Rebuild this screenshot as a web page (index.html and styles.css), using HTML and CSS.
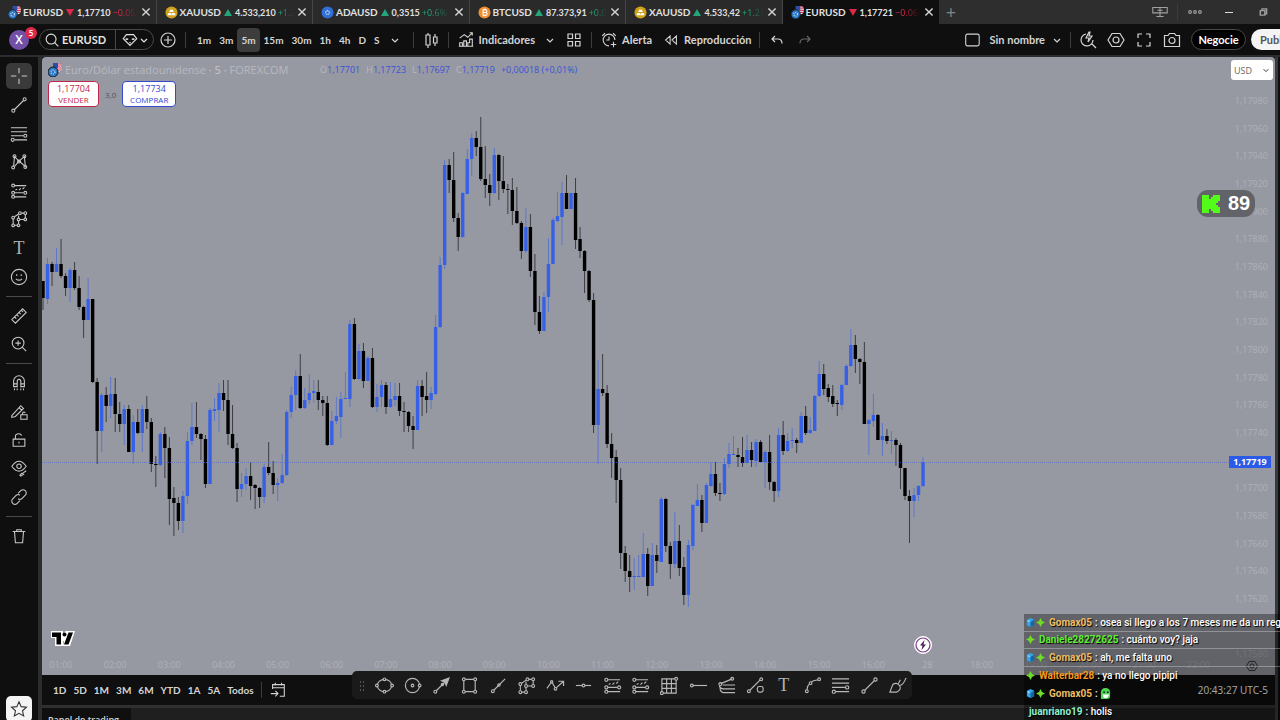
FILE: index.html
```html
<!DOCTYPE html>
<html lang="es">
<head>
    <meta charset="UTF-8">
    <meta name="viewport" content="width=device-width, initial-scale=1.0">
    <title>EURUSD 1,17721</title>
    <link rel="stylesheet" href="styles.css">
</head>
<body>
    <!-- icon sprite -->
    <svg class="sprite" aria-hidden="true">
        <symbol id="i-close" viewBox="0 0 10 10"><path d="M2 2l6 6M8 2l-6 6"/></symbol>
        <symbol id="i-chevron" viewBox="0 0 10 10"><path d="M2 4l3 3 3-3"/></symbol>
        <symbol id="i-pair" viewBox="0 0 14 14"><circle cx="9.500" cy="4.500" r="4.500" fill="#e8e8f0" stroke="none"/><path d="M9 1h4M9 3h5M9 5h5M9 7h4" stroke="#d8405a"/><path d="M5 0h5v5H5z" fill="#2a4fa8" stroke="none"/><circle cx="5" cy="9" r="5" fill="#2a78c8" stroke="#1a1a1a" stroke-width="1"/><circle cx="5" cy="9" r="2" stroke="#d8e0f0" stroke-dasharray="1 1"/></symbol>
        <symbol id="i-gold" viewBox="0 0 14 14"><circle cx="7" cy="7" r="6.500" fill="#d0a21c" stroke="none"/><path d="M5.500 4h3l1 2.500h-5zM3.500 7.500h3l.5 2.500H2.500zM7.500 7.500h3l1 2.500H7z" fill="#fff" stroke="none"/></symbol>
        <symbol id="i-ada" viewBox="0 0 14 14"><circle cx="7" cy="7" r="6.500" fill="#2f6fd6" stroke="none"/><circle cx="7" cy="7" r="2" stroke="#dde8ff" stroke-dasharray="1 .6"/></symbol>
        <symbol id="i-btc" viewBox="0 0 14 14"><circle cx="7" cy="7" r="6.500" fill="#ee9030" stroke="none"/><path d="M5.500 4v6M5 4h3a1.400 1.400 0 0 1 0 3H6h2.300a1.500 1.500 0 0 1 0 3H5M6.500 3v1M8 3v1M6.500 10v1M8 10v1" stroke="#fff"/></symbol>
        <symbol id="i-search" viewBox="0 0 20 20"><circle cx="9" cy="9" r="5.500"/><path d="M13 13l4 4"/></symbol>
        <symbol id="i-diamond" viewBox="0 0 20 20"><path d="M6 4h8l3.500 4.500L10 16 2.500 8.500zM6.500 8v2M8 9H5M13.500 8v2M15 9h-3M9 13h2"/></symbol>
        <symbol id="i-plus" viewBox="0 0 20 20"><circle cx="10" cy="10" r="7"/><path d="M10 6v8M6 10h8"/></symbol>
        <symbol id="i-candles" viewBox="0 0 20 20"><path d="M5 5h4v10H5zM7 3v2M7 15v3M12.500 7h3.500v6h-3.500zM14 4v3M14 13v3"/></symbol>
        <symbol id="i-indicators" viewBox="0 0 20 20"><path d="M3 8l5-4 4 3 5-5M14 2h3v3M3 17v-4h3v4M7.500 17v-6h3v6M12 17v-4h2v-4h3v8zM2 17h16"/></symbol>
        <symbol id="i-grid" viewBox="0 0 20 20"><path d="M4 4h4.500v4.500H4zM11.500 4H16v4.500h-4.500zM4 11.500h4.500V16H4zM11.500 11.500H16V16h-4.500z"/></symbol>
        <symbol id="i-alert" viewBox="0 0 20 20"><path d="M16.500 10A6.500 6.500 0 1 0 10 16.500M10 6v4H7M2.500 5.500l3-3M14.500 2.500l3 3M15 12v6M12 15h6"/></symbol>
        <symbol id="i-rewind" viewBox="0 0 20 20"><path d="M9 5.500v9L4 10zM16 5.500v9L11 10z"/></symbol>
        <symbol id="i-undo" viewBox="0 0 20 20"><path d="M8 6L5 9l3 3M5 9h6q4 0 4 4.500"/></symbol>
        <symbol id="i-redo" viewBox="0 0 20 20"><path d="M12 6l3 3-3 3M15 9H9q-4 0-4 4.500"/></symbol>
        <symbol id="i-square" viewBox="0 0 20 20"><rect x="3" y="3.500" width="15" height="13" rx="2"/></symbol>
        <symbol id="i-quick" viewBox="0 0 20 20"><path d="M8 4a6 6 0 1 0 7 6M14 14l4 4M11 2L8 8h3l-1 4 4-6h-3l1-4z"/></symbol>
        <symbol id="i-hex" viewBox="0 0 20 20"><path d="M6 3.500h8l4 6.500-4 6.500H6L2 10z"/><circle cx="10" cy="10" r="3"/></symbol>
        <symbol id="i-full" viewBox="0 0 20 20"><path d="M4 8V4h4M12 4h4v4M16 12v4h-4M8 16H4v-4"/></symbol>
        <symbol id="i-camera" viewBox="0 0 20 20"><path d="M2.500 5.500H6l1.500-2h5l1.500 2h3.500v11h-15z"/><circle cx="10" cy="10.500" r="3"/></symbol>
        <symbol id="i-layout" viewBox="0 0 20 20"><path d="M2 5h16v6H2zM10 5v10M6 15h8M7 8h6"/></symbol>
        <symbol id="i-dots" viewBox="0 0 20 20"><circle cx="4.500" cy="10" r="1.500"/><circle cx="10" cy="10" r="1.500"/><circle cx="15.500" cy="10" r="1.500"/></symbol>
        <symbol id="i-restore" viewBox="0 0 20 20"><path d="M7 8.500h5v5H7zM9 8V6.500h5V12h-1.500" stroke-width="1.600"/></symbol>
        <symbol id="i-cross" viewBox="0 0 20 20"><path d="M10 1v6M10 13v6M1 10h6M13 10h6"/></symbol>
        <symbol id="i-line" viewBox="0 0 20 20"><path d="M5 15L15 5"/><circle cx="3.700" cy="16.300" r="1.700"/><circle cx="16.300" cy="3.700" r="1.700"/></symbol>
        <symbol id="i-fib" viewBox="0 0 20 20"><path d="M1 3h18M1 7.500h18M1 12h14M5 16.500h14"/><circle cx="17" cy="12" r="1.700"/><circle cx="3" cy="16.500" r="1.700"/></symbol>
        <symbol id="i-pattern" viewBox="0 0 20 20"><path d="M4 15L5 4l5 5 6-5 1 11-7-6-5 6"/><circle cx="3.500" cy="16" r="1.600"/><circle cx="5" cy="3.500" r="1.600"/><circle cx="10" cy="9.500" r="1.600"/><circle cx="16" cy="3.500" r="1.600"/><circle cx="17" cy="15.500" r="1.600"/></symbol>
        <symbol id="i-position" viewBox="0 0 20 20"><path d="M5 4h13M5 12h10M5 16.500h13M6 9l2-1M10 9l2-2M14 8l2-2"/><circle cx="3.500" cy="4" r="1.600"/><circle cx="3.500" cy="12" r="1.600"/><circle cx="17" cy="12" r="1.600"/><circle cx="3.500" cy="16.500" r="1.600"/></symbol>
        <symbol id="i-ghost" viewBox="0 0 20 20"><path d="M3.500 10v5.500M5 17h3M9.500 15.500V12M11 10.500h4.500M17 9V5M15.500 3.500h-3M9.500 4.500L5 7.500M9.500 9V6"/><circle cx="3.500" cy="8.500" r="1.500"/><circle cx="3.500" cy="17" r="1.500"/><circle cx="9.500" cy="17" r="1.500"/><circle cx="9.500" cy="10.500" r="1.500"/><circle cx="17" cy="10.500" r="1.500"/><circle cx="17" cy="3.500" r="1.500"/><circle cx="11" cy="3.500" r="1.500"/></symbol>
        <symbol id="i-smile" viewBox="0 0 20 20"><circle cx="10" cy="10" r="8.500"/><path d="M6.500 12q3.500 3 7 0M7.500 7v2M12.500 7v2"/></symbol>
        <symbol id="i-ruler" viewBox="0 0 20 20"><path d="M2 14L14 2l4 4L6 18zM5 11l2 2M7.500 8.500l2 2M10 6l2 2M12.500 3.500l2 2"/></symbol>
        <symbol id="i-zoom" viewBox="0 0 20 20"><circle cx="9" cy="9" r="6.500"/><path d="M9 6v6M6 9h6M13.500 13.500L18 18"/></symbol>
        <symbol id="i-magnet" viewBox="0 0 20 20"><path d="M4 14V8a6 6 0 0 1 12 0v6h-4V8a2 2 0 0 0-4 0v6zM4 11h4M12 11h4M5 16v2M8 16v2M12 16v2M15 16v2"/></symbol>
        <symbol id="i-penlock" viewBox="0 0 20 20"><path d="M2 14L12 3l3 3L6 15l-4 1zM10 5l3 3M12 13h7v5h-7zM14 13v-2q1.500-2 3 0"/></symbol>
        <symbol id="i-lock" viewBox="0 0 20 20"><path d="M3.500 9h13v8h-13zM6 9V6q0-3 4-3 2 0 3 2M10 12v2"/></symbol>
        <symbol id="i-eye" viewBox="0 0 20 20"><path d="M2 8q8-11 16 0-8 11-16 0zM11 18l2-2 2 1-3 2zM14 16l4-3"/><circle cx="10" cy="8" r="2.500"/></symbol>
        <symbol id="i-link" viewBox="0 0 20 20"><path d="M9 6l3-3a3.500 3.500 0 0 1 5 5l-4 4q-2 1.500-4 0M11 14l-3 3a3.500 3.500 0 0 1-5-5l4-4q2-1.500 4 0"/></symbol>
        <symbol id="i-trash" viewBox="0 0 20 20"><path d="M3 5h14M7.500 5V3h5v2M5 5l1 12.500h8L15 5"/></symbol>
        <symbol id="i-star" viewBox="0 0 20 20"><path d="M10 2l2.400 5.400 5.900.6-4.400 4 1.300 5.800L10 14.800l-5.200 3L6.100 12 1.700 8l5.900-.6z"/></symbol>
        <symbol id="i-ellipse" viewBox="0 0 20 20"><ellipse cx="10" cy="10" rx="7.500" ry="6.500"/><g fill="#1a1a1a"><circle cx="10" cy="3.500" r="1.400"/><circle cx="10" cy="16.500" r="1.400"/><circle cx="2" cy="10" r="1.400"/><circle cx="18" cy="10" r="1.400"/></g></symbol>
        <symbol id="i-circle" viewBox="0 0 20 20"><circle cx="10" cy="10" r="7.500"/><circle cx="10" cy="10" r="1.400"/><circle cx="17.500" cy="10" r="1.400" fill="#1a1a1a"/></symbol>
        <symbol id="i-arrow" viewBox="0 0 20 20"><path d="M4.500 15.500L15 5"/><path d="M18 2l-3 8-1.500-3.500L10 5z" fill="currentColor"/><circle cx="3.500" cy="16.500" r="1.500"/><circle cx="11" cy="9" r="1.200"/></symbol>
        <symbol id="i-rect" viewBox="0 0 20 20"><path d="M4 3.500h12v13H4z"/><g fill="#1a1a1a"><circle cx="4" cy="3.500" r="1.500"/><circle cx="16" cy="3.500" r="1.500"/><circle cx="4" cy="16.500" r="1.500"/><circle cx="16" cy="16.500" r="1.500"/></g></symbol>
        <symbol id="i-ray" viewBox="0 0 20 20"><path d="M5 15L17 3"/><circle cx="4" cy="16" r="1.500"/><circle cx="10.500" cy="9.500" r="1.200"/></symbol>
        <symbol id="i-zigzag" viewBox="0 0 20 20"><path d="M1 13l5-7 4 7 8-7M13 5.500h5.500v5"/><circle cx="6" cy="6" r="1.200" fill="#1a1a1a"/><circle cx="10" cy="13.500" r="1.400" fill="#1a1a1a"/></symbol>
        <symbol id="i-hline" viewBox="0 0 20 20"><path d="M2 10h16"/><circle cx="10" cy="10" r="1.500" fill="#1a1a1a"/></symbol>
        <symbol id="i-hray" viewBox="0 0 20 20"><path d="M4 10h15"/><circle cx="3" cy="10" r="1.500"/></symbol>
        <symbol id="i-table" viewBox="0 0 20 20"><path d="M2 3h15v15H2zM7 3v15M12 3v15M2 8h15M2 13h15"/><circle cx="17" cy="3" r="1.500" fill="#1a1a1a"/><circle cx="2" cy="18" r="1.500" fill="#1a1a1a"/></symbol>
        <symbol id="i-fan" viewBox="0 0 20 20"><path d="M4 8l12-5M2.500 10.500q1 3 4 3H19M6 9.500h13M3 13q1 4.500 4 4.500h12"/><circle cx="3.500" cy="8.500" r="1.500"/><circle cx="16" cy="3" r="1.500"/></symbol>
        <symbol id="i-shapes" viewBox="0 0 20 20"><path d="M4 15L15 4"/><circle cx="3" cy="16" r="1.500"/><circle cx="16" cy="3.500" r="1.500"/><rect x="12" y="11" width="6" height="6" rx="2"/></symbol>
        <symbol id="i-curve" viewBox="0 0 20 20"><path d="M4 15Q5 5 16 4"/><circle cx="4" cy="16" r="1.500"/><circle cx="8" cy="7.500" r="1.400" fill="#1a1a1a"/><circle cx="17" cy="3.500" r="1.500"/></symbol>
        <symbol id="i-brush" viewBox="0 0 20 20"><path d="M2 17l3-8q4-3 7 1t-3 7zM11 8l2-4M12 10q4 0 7-8"/></symbol>
        <symbol id="i-calendar" viewBox="0 0 20 20"><path d="M4 9V4h13v13h-5M4 7.500h13M7 2v3M14 2v3M2 14h8M7 11l3 3-3 3"/></symbol>
        <symbol id="i-cube" viewBox="0 0 10 10"><path d="M5 0l4 2v6L5 10 1 8V2z" fill="#30a8e8" stroke="none"/><path d="M5 4.500L9 2v6L5 10z" fill="#1565a8" stroke="none"/><path d="M2 3l2 1" stroke="#b8ecff"/></symbol>
        <symbol id="i-spark" viewBox="0 0 10 10"><path d="M5 0l1.700 3.300L10 5 6.700 6.700 5 10 3.300 6.700 0 5l3.300-1.700z" fill="#6fdc26" stroke="none"/></symbol>
        <symbol id="i-emote" viewBox="0 0 12 12"><path d="M1 12V5q0-5 5-5t5 5v4q0 3-3 3z" fill="#4fd455" stroke="none"/><path d="M3 7h7q-1 4-4 4T3 7z" fill="#fff" stroke="none"/><circle cx="4.500" cy="4.500" r="1" fill="#123" stroke="none"/><circle cx="8.500" cy="4.500" r="1" fill="#123" stroke="none"/></symbol>
    </svg>

    <header>
        <div class="titlebar">
            <nav class="tabs">
                <div class="tab"><svg><use href="#i-pair"/></svg><a href="#">EURUSD</a><i class="down"></i><b>1,17710</b><span class="pct red">−0.05%</span><button aria-label="Cerrar"><svg><use href="#i-close"/></svg></button></div>
                <div class="tab"><svg><use href="#i-gold"/></svg><a href="#">XAUUSD</a><i class="up"></i><b>4.533,210</b><span class="pct green">+1.2%</span><button aria-label="Cerrar"><svg><use href="#i-close"/></svg></button></div>
                <div class="tab"><svg><use href="#i-ada"/></svg><a href="#">ADAUSD</a><i class="up"></i><b>0,3515</b><span class="pct green">+0.6% / U</span><button aria-label="Cerrar"><svg><use href="#i-close"/></svg></button></div>
                <div class="tab"><svg><use href="#i-btc"/></svg><a href="#">BTCUSD</a><i class="up"></i><b>87.373,91</b><span class="pct green">+0.06%</span><button aria-label="Cerrar"><svg><use href="#i-close"/></svg></button></div>
                <div class="tab"><svg><use href="#i-gold"/></svg><a href="#">XAUUSD</a><i class="up"></i><b>4.533,42</b><span class="pct green">+1.21%</span><button aria-label="Cerrar"><svg><use href="#i-close"/></svg></button></div>
                <div class="tab active"><svg><use href="#i-pair"/></svg><a href="#">EURUSD</a><i class="down"></i><b>1,17721</b><span class="pct red">−0.06%</span><button aria-label="Cerrar"><svg><use href="#i-close"/></svg></button></div>
            </nav>
            <button class="new-tab" aria-label="Nueva pestaña">+</button>
            <div class="window-buttons">
                <button aria-label="Diseño"><svg><use href="#i-layout"/></svg></button>
                <span class="sep"></span>
                <button aria-label="Más"><svg><use href="#i-dots"/></svg></button>
                <button aria-label="Minimizar"><span class="minimize"></span></button>
                <button aria-label="Restaurar"><svg><use href="#i-restore"/></svg></button>
            </div>
        </div>

        <div class="toolbar">
            <button class="avatar">X<span class="badge">5</span></button>
            <div class="symbol">
                <button class="symbol-name"><svg><use href="#i-search"/></svg>EURUSD</button>
                <button class="symbol-more" aria-label="Comparar"><svg><use href="#i-diamond"/></svg><svg class="small"><use href="#i-chevron"/></svg></button>
            </div>
            <button class="icon" aria-label="Añadir"><svg><use href="#i-plus"/></svg></button>
            <span class="sep"></span>
            <div class="intervals">
                <button>1m</button><button>3m</button><button class="on">5m</button><button>15m</button><button>30m</button><button>1h</button><button>4h</button><button>D</button><button>S</button>
                <button aria-label="Más intervalos"><svg class="small"><use href="#i-chevron"/></svg></button>
            </div>
            <span class="sep"></span>
            <button class="icon" aria-label="Velas"><svg><use href="#i-candles"/></svg></button>
            <span class="sep"></span>
            <button class="labelled"><svg><use href="#i-indicators"/></svg>Indicadores</button>
            <button class="narrow" aria-label="Favoritos"><svg class="small"><use href="#i-chevron"/></svg></button>
            <button class="icon" aria-label="Plantillas"><svg><use href="#i-grid"/></svg></button>
            <span class="sep"></span>
            <button class="labelled"><svg><use href="#i-alert"/></svg>Alerta</button>
            <button class="labelled"><svg><use href="#i-rewind"/></svg>Reproducción</button>
            <span class="sep"></span>
            <button class="icon" aria-label="Deshacer"><svg><use href="#i-undo"/></svg></button>
            <button class="icon dim" aria-label="Rehacer"><svg><use href="#i-redo"/></svg></button>
            <div class="right">
                <button class="labelled"><svg><use href="#i-square"/></svg>Sin nombre</button>
                <button class="narrow" aria-label="Diseños"><svg class="small"><use href="#i-chevron"/></svg></button>
                <span class="sep"></span>
                <button class="icon" aria-label="Búsqueda rápida"><svg><use href="#i-quick"/></svg></button>
                <button class="icon" aria-label="Configuración"><svg><use href="#i-hex"/></svg></button>
                <button class="icon" aria-label="Pantalla completa"><svg><use href="#i-full"/></svg></button>
                <button class="icon" aria-label="Captura"><svg><use href="#i-camera"/></svg></button>
                <button class="trade">Negocie</button>
                <button class="publish">Publicar</button>
            </div>
        </div>
    </header>

    <main>
        <aside>
            <div class="tools eight">
                <button class="on" aria-label="Cruz"><svg><use href="#i-cross"/></svg></button>
                <button aria-label="Línea"><svg><use href="#i-line"/></svg></button>
                <button aria-label="Fibonacci"><svg><use href="#i-fib"/></svg></button>
                <button aria-label="Patrones"><svg><use href="#i-pattern"/></svg></button>
                <button aria-label="Posición"><svg><use href="#i-position"/></svg></button>
                <button aria-label="Pronóstico"><svg><use href="#i-ghost"/></svg></button>
                <button class="serif">T</button>
                <button aria-label="Iconos"><svg><use href="#i-smile"/></svg></button>
            </div>
            <hr>
            <div class="tools two">
                <button aria-label="Medir"><svg><use href="#i-ruler"/></svg></button>
                <button aria-label="Zoom"><svg><use href="#i-zoom"/></svg></button>
            </div>
            <hr>
            <div class="tools five">
                <button aria-label="Imán"><svg><use href="#i-magnet"/></svg></button>
                <button aria-label="Modo dibujo"><svg><use href="#i-penlock"/></svg></button>
                <button aria-label="Bloquear"><svg><use href="#i-lock"/></svg></button>
                <button aria-label="Ocultar"><svg><use href="#i-eye"/></svg></button>
                <button aria-label="Enlazar"><svg><use href="#i-link"/></svg></button>
            </div>
            <hr>
            <div class="tools one">
                <button aria-label="Eliminar"><svg><use href="#i-trash"/></svg></button>
            </div>
            <button class="favorite" aria-label="Barra de favoritos"><svg><use href="#i-star"/></svg></button>
        </aside>

        <div class="center">
            <section class="chart">
                <svg id="plot" class="plot"></svg>

                <div class="legend">
                    <div class="legend-row">
                        <svg><use href="#i-pair"/></svg>
                        <h1>Euro/Dólar estadounidense <em>· 5 ·</em> FOREXCOM</h1>
                        <p class="ohlc"><span>O<b>1,17701</b></span><span>H<b>1,17723</b></span><span>L<b>1,17697</b></span><span>C<b>1,17719</b></span><b>+0,00018 (+0,01%)</b></p>
                    </div>
                    <div class="orders">
                        <button class="sell"><b>1,17704</b>VENDER</button>
                        <span>3,0</span>
                        <button class="buy"><b>1,17734</b>COMPRAR</button>
                    </div>
                </div>

                <div id="price_axis" class="price-axis">
                    <select aria-label="Moneda"><option>USD</option></select>
                    <svg class="select-arrow"><use href="#i-chevron"/></svg>
                    <strong class="last-price">1,17719</strong>
                </div>
                <div id="time_axis" class="time-axis"></div>

                <svg class="logo" viewBox="0 0 26 17"><path d="M1 1h12v4h1a3 3 0 0 1 3-4h8l-5 15h-7l1-5h-1v5H5V8H1z" fill="#fff"/><path d="M2 2.500h9v12H6.500V7H2zM18.500 2.500H23l-4.500 12H14z" fill="#000"/><circle cx="14.500" cy="4.500" r="2" fill="#000"/></svg>
                <svg class="event" viewBox="0 0 18 18"><circle cx="9" cy="9" r="8.500" fill="#fff" stroke="#fff" stroke-width="1"/><circle cx="9" cy="9" r="7" stroke="#7b3a86"/><path d="M10.500 4L6 9.500h2.500L7.500 14 12 8.500H9.500z" fill="#4a1c58" stroke="none"/></svg>
                <button class="axis-settings" aria-label="Ajustes del eje"><svg><use href="#i-hex"/></svg></button>

                <div class="drawbar">
                    <span class="handle"></span>
                    <div class="draw-icons">
                        <button aria-label="Elipse"><svg><use href="#i-ellipse"/></svg></button>
                        <button aria-label="Círculo"><svg><use href="#i-circle"/></svg></button>
                        <button aria-label="Flecha"><svg><use href="#i-arrow"/></svg></button>
                        <button aria-label="Rectángulo"><svg><use href="#i-rect"/></svg></button>
                        <button aria-label="Rayo"><svg><use href="#i-ray"/></svg></button>
                        <button aria-label="Pronóstico"><svg><use href="#i-ghost"/></svg></button>
                        <button aria-label="Trayectoria"><svg><use href="#i-zigzag"/></svg></button>
                        <button aria-label="Horizontal"><svg><use href="#i-hline"/></svg></button>
                        <button aria-label="Posición larga"><svg><use href="#i-position"/></svg></button>
                        <button aria-label="Posición corta"><svg><use href="#i-position"/></svg></button>
                        <button aria-label="Tabla"><svg><use href="#i-table"/></svg></button>
                        <button aria-label="Rayo horizontal"><svg><use href="#i-hray"/></svg></button>
                        <button aria-label="Abanico"><svg><use href="#i-fan"/></svg></button>
                        <button aria-label="Formas"><svg><use href="#i-shapes"/></svg></button>
                        <button class="serif">T</button>
                        <button aria-label="Curva"><svg><use href="#i-curve"/></svg></button>
                        <button aria-label="Fibonacci"><svg><use href="#i-fib"/></svg></button>
                        <button aria-label="Línea"><svg><use href="#i-line"/></svg></button>
                        <button aria-label="Pincel"><svg><use href="#i-brush"/></svg></button>
                    </div>
                </div>
            </section>

            <div class="ranges">
                <button>1D</button><button>5D</button><button>1M</button><button>3M</button><button>6M</button><button>YTD</button><button>1A</button><button>5A</button><button>Todos</button>
                <span class="sep"></span>
                <button aria-label="Ir a"><svg><use href="#i-calendar"/></svg></button>
                <button class="clock">20:43:27 UTC-5</button>
            </div>
            <div class="panel"><button>Panel de trading</button></div>
        </div>
    </main>

    <div class="viewers">
        <svg viewBox="0 0 18 18"><path d="M0 0h7v4h2V2h2V0h7v6h-2v2h-2v2h2v2h2v6h-7v-2H9v-2H7v4H0z" fill="#53fc18"/></svg>89
    </div>

    <ul class="chat">
        <li><svg><use href="#i-cube"/></svg><svg><use href="#i-spark"/></svg><b class="gold">Gomax05</b>: osea si llego a los 7 meses me da un regalo</li>
        <li><svg><use href="#i-spark"/></svg><b class="lime">Daniele28272625</b>: cuánto voy? jaja</li>
        <li><svg><use href="#i-cube"/></svg><svg><use href="#i-spark"/></svg><b class="gold">Gomax05</b>: ah, me falta uno</li>
        <li><svg><use href="#i-spark"/></svg><b class="orange">Walterbar28</b>: ya no llego pipipi</li>
        <li><svg><use href="#i-cube"/></svg><svg><use href="#i-spark"/></svg><b class="gold">Gomax05</b>: <svg class="emote"><use href="#i-emote"/></svg></li>
        <li><b class="mint">juanriano19</b>: holis</li>
    </ul>

    <script src="chart.js"></script>
</body>
</html>
```
FILE: styles.css
```css
*{
    box-sizing: border-box;
}

body{
    margin: 0;
    height: 100vh;
    overflow: hidden;
    display: flex;
    flex-direction: column;
    background: #0f0f0f;
    color: #d4d4d4;
    font-family: "Open Sans", "Noto Sans", sans-serif;
    font-size: 11px;
    position: relative;
}

button{
    background: none;
    border: 0;
    padding: 0;
    margin: 0;
    color: inherit;
    font: inherit;
    white-space: nowrap;
    display: flex;
    align-items: center;
    justify-content: center;
}

a{
    color: inherit;
    text-decoration: none;
}

svg{
    width: 18px;
    height: 18px;
    flex: none;
    fill: none;
    stroke: currentColor;
    stroke-width: 1.2;
}

svg.small{
    width: 10px;
    height: 10px;
}

.sprite{
    position: absolute;
    width: 0;
    height: 0;
}

.sep{
    width: 1px;
    height: 16px;
    background: #3c3c3c;
    flex: none;
}

/* window tabs */
.titlebar{
    display: flex;
    height: 24px;
    background: #2e2e2e;
}

.tabs{
    flex: 0 1 939px;
    display: grid;
    grid-template-columns: repeat(6, 1fr);
}

.tab{
    display: flex;
    align-items: center;
    gap: 2px;
    padding: 0 4px 0 8px;
    min-width: 0;
    font-size: 9px;
    border-right: 1px solid #454545;
    background: #2a2a2a;
}

.tab.active{
    background: #0f0f0f;
    border: 0;
}

.tab svg{
    width: 13px;
    height: 13px;
}

.tab a, .tab b{
    font-family: Lato, sans-serif;
    font-weight: 700;
    color: #e0e0e0;
}

.tab a{
    font-size: 10px;
}

.tab i{
    margin: 0 1px;
    border: 4px solid transparent;
    border-top-width: 0;
    border-bottom: 7px solid #22a67a;
}

.tab i.down{
    border-top: 7px solid #e0284a;
    border-bottom-width: 0;
}

.pct{
    flex: 1;
    overflow: hidden;
    white-space: nowrap;
    mask-image: linear-gradient(90deg, #000 30%, transparent);
}

.red{
    color: #e0284a;
}

.green{
    color: #22a67a;
}

.tab button svg{
    width: 12px;
    height: 12px;
}

.new-tab{
    width: 24px;
    font-size: 18px;
    color: #858585;
}

.window-buttons{
    margin-left: auto;
    display: flex;
    align-items: center;
}

.window-buttons button{
    width: 34px;
    color: #a0a0a0;
}

.minimize{
    width: 8px;
    height: 1px;
    background: #ddd;
}

/* top toolbar */
.toolbar{
    display: flex;
    align-items: center;
    height: 33px;
    border-bottom: 2px solid #2c2c2e;
    font-weight: 600;
    overflow: hidden;
}

.toolbar svg:not(.small){
    width: 20px;
    height: 20px;
}

.avatar{
    position: relative;
    width: 20px;
    height: 20px;
    margin: 0 10px 0 9px;
    flex: none;
    border-radius: 50%;
    background: #7350a8;
    color: #fff;
    font-size: 12px;
}

.badge{
    position: absolute;
    left: 16px;
    top: -3px;
    width: 12px;
    height: 12px;
    border-radius: 50%;
    background: #e0284a;
    font-size: 8px;
    line-height: 12px;
}

.symbol{
    display: flex;
    width: 115px;
    height: 21px;
    border: 1px solid #4a4a4a;
    border-radius: 11px;
    color: #e4e4e4;
}

.toolbar .symbol svg:not(.small), .toolbar .labelled svg{
    width: 18px;
    height: 18px;
}

.symbol-name{
    width: 75px;
    gap: 1px;
    padding-left: 3px;
    justify-content: flex-start;
}

.symbol-more{
    flex: 1;
    border-left: 1px solid #4a4a4a;
}

.symbol-name, .labelled, .trade, .publish, .intervals{
    font-family: Lato, "Open Sans", sans-serif;
    font-weight: 700;
}

.icon{
    width: 28px;
    height: 24px;
    flex: none;
}

.intervals{
    display: flex;
    height: 24px;
    padding: 0 4px;
    font-size: 10px;
}

.intervals button{
    padding: 0 4px;
    border-radius: 4px;
}

.intervals button:last-child{
    padding: 0 6px;
}

.intervals button.on{
    background: #3d3d3d;
}

.toolbar > .sep{
    margin: 0 3px;
}

.labelled{
    gap: 4px;
    margin: 0 5px;
}

.narrow{
    width: 20px;
}

.dim{
    color: #666;
}

.right{
    margin-left: auto;
    display: flex;
    align-items: center;
}

.right .labelled{
    gap: 9px;
    margin: 0 2px;
}

.right .sep{
    margin: 0 3px;
}

.trade{
    height: 21px;
    width: 55px;
    margin: 0 5px;
    border: 1px solid #4a4a4a;
    border-radius: 11px;
    background: #000;
    color: #fff;
}

.publish{
    width: 29px;
    height: 21px;
    padding-left: 9px;
    overflow: hidden;
    justify-content: flex-start;
    border-radius: 11px 0 0 11px;
    background: #f4f4f4;
    color: #555;
}

/* drawing tools */
main{
    flex: 1;
    min-height: 0;
    display: flex;
}

aside{
    width: 42px;
    padding-top: 5px;
    display: flex;
    flex-direction: column;
    align-items: center;
    border-right: 4px solid #2c2e2e;
    color: #c8c8c8;
}

.tools{
    display: grid;
    grid-auto-rows: 1fr;
    align-items: center;
}

.eight{ height: 229px; }
.two{ height: 56px; }
.five{ height: 142px; }
.one{ height: 28px; }

.tools button{
    width: 26px;
    height: 26px;
    border-radius: 5px;
}

.tools button.on{
    background: #3a3a3a;
}

button.serif{
    font-family: "Liberation Serif", serif;
    font-size: 18px;
    color: #b0b0b0;
}

aside hr{
    width: 26px;
    margin: 5px 0;
    border: 0;
    border-top: 1px solid #4a4a4a;
}

.favorite{
    width: 26px;
    height: 26px;
    margin-top: auto;
    margin-bottom: -2px;
    border-radius: 5px;
    background: #f4f4f4;
    color: #333;
}

.center{
    flex: 1;
    min-width: 0;
    display: flex;
    flex-direction: column;
    border-right: 3px solid #38393b;
    margin-right: 2px;
}

/* chart */
.chart{
    flex: 1;
    min-height: 0;
    position: relative;
    background: #9799a2;
    border-radius: 4px 4px 0 0;
}

.plot{
    position: absolute;
    width: 100%;
    height: 100%;
    stroke-width: 1;
    stroke: none;
}

.plot .up{
    fill: #3660e6;
}

.plot .down{
    fill: #000;
}

.plot .wick{
    opacity: 0.6;
}

.legend{
    position: relative;
    padding: 3px 6px;
}

.legend-row{
    display: flex;
    align-items: center;
    gap: 3px;
    height: 19px;
}

.legend-row svg{
    width: 14px;
    height: 14px;
}

h1{
    margin: 0;
    width: 252px;
    font-size: 11px;
    font-weight: 400;
    color: #b6b8c1;
    white-space: nowrap;
}

h1 em{
    font-style: normal;
    color: #c6c8cf;
}

.ohlc{
    margin: 0;
    display: flex;
    gap: 6px;
    font-size: 9px;
    color: #b6b8c1;
    white-space: nowrap;
}

.ohlc b{
    font-weight: 400;
    color: #3a50dc;
}

.orders{
    display: flex;
    align-items: center;
    gap: 6px;
    margin-top: 2px;
    font-size: 8px;
    color: #50525a;
}

.orders button{
    height: 26px;
    flex-direction: column;
    background: #fff;
    border: 1px solid;
    border-radius: 4px;
    line-height: 11px;
}

.orders b{
    font-size: 9px;
    font-weight: 400;
}

.sell{
    width: 51px;
    color: #c0284a;
}

.buy{
    width: 54px;
    color: #3448d0;
}

.price-axis{
    position: absolute;
    right: 0;
    top: 0;
    width: 46px;
    height: 100%;
}

.price-axis span, .time-axis span{
    position: absolute;
    line-height: 12px;
    font-size: 9px;
    color: #aeb0b9;
}

.price-axis span{
    right: 7px;
}

.price-axis select{
    position: absolute;
    left: 2px;
    top: 3px;
    width: 42px;
    height: 20px;
    padding: 0 3px;
    appearance: none;
    border: 0;
    border-radius: 3px;
    background: #fff;
    color: #666;
    font: 9px "Open Sans", sans-serif;
}

.select-arrow{
    position: absolute;
    right: 5px;
    top: 9px;
    width: 8px;
    height: 8px;
    color: #333;
}

.last-price{
    position: absolute;
    left: 0;
    top: 399px;
    width: 42px;
    height: 12px;
    background: #2c5ae8;
    color: #fff;
    font-size: 9px;
    line-height: 12px;
    text-align: center;
}

.time-axis{
    position: absolute;
    left: 0;
    right: 46px;
    bottom: 4px;
    height: 12px;
    overflow: hidden;
}

.time-axis span{
    transform: translateX(-50%);
}

.logo{
    position: absolute;
    left: 8px;
    bottom: 28px;
    width: 26px;
    height: 17px;
    stroke: none;
}

.event{
    position: absolute;
    left: 872px;
    bottom: 21px;
}

.axis-settings{
    position: absolute;
    right: 16px;
    bottom: 2px;
    color: #222;
}

.axis-settings svg{
    width: 14px;
    height: 14px;
}

.drawbar{
    position: absolute;
    z-index: 1;
    left: 310px;
    bottom: -24px;
    width: 560px;
    height: 28px;
    display: flex;
    align-items: center;
    border-radius: 5px;
    background: #1a1a1a;
    color: #b8b8b8;
}

.drawbar svg{
    width: 19px;
    height: 19px;
}

.handle{
    width: 5px;
    height: 11px;
    margin: 0 6px 0 7px;
    background: radial-gradient(circle, #555 1px, transparent 1px) 0 0 / 3px 4px;
}

.draw-icons{
    flex: 1;
    display: grid;
    grid-template-columns: repeat(19, 1fr);
}

/* bottom */
.ranges{
    display: flex;
    align-items: center;
    gap: 7px;
    height: 30px;
    flex: none;
    padding: 0 7px 0 11px;
    font-family: Lato, "Open Sans", sans-serif;
    font-weight: 700;
    font-size: 10px;
}

.clock{
    margin-left: auto;
    font-family: "Open Sans", sans-serif;
    font-weight: 400;
    color: #fff;
}

.panel{
    flex: none;
    height: 15px;
    border-top: 3px solid #303030;
    background: #1f1f1f;
    overflow: hidden;
}

.panel button{
    width: 89px;
    height: 24px;
    padding: 5px 6px;
    background: #0f0f0f;
    font-size: 9px;
    font-weight: 600;
    align-items: flex-start;
    justify-content: flex-start;
    line-height: 14px;
}

/* stream overlays */
.viewers{
    position: absolute;
    right: 25px;
    top: 190px;
    width: 58px;
    height: 27px;
    display: flex;
    align-items: center;
    justify-content: center;
    gap: 8px;
    border-radius: 11px;
    background: #626368;
    color: #fff;
    font: bold 20px "Liberation Sans", sans-serif;
}

.viewers svg{
    stroke: none;
}

.chat{
    position: absolute;
    z-index: 2;
    right: 0;
    bottom: 0;
    width: 256px;
    height: 106px;
    margin: 0;
    padding: 0;
    list-style: none;
    display: grid;
    grid-template-rows: repeat(6, 1fr);
    overflow: hidden;
    background: rgba(0, 0, 0, 0.35);
    font: 500 10px Roboto, sans-serif;
    color: #fff;
}

.chat li{
    display: flex;
    align-items: center;
    padding-left: 2px;
    white-space: pre;
    text-shadow: 1px 1px 1px #000;
}

.chat li:nth-child(-n+4){
    border-bottom: 1px solid rgba(255, 255, 255, 0.3);
}

.chat li:nth-child(4){
    border-color: transparent;
}

.chat svg{
    width: 9px;
    height: 9px;
    margin-right: 1px;
}

.chat svg.emote{
    width: 11px;
    height: 11px;
}

.chat b{
    margin: 0 3px;
    font-weight: 700;
}

.gold{ color: #f2bd62; }
.lime{ color: #5cf032; }
.orange{ color: #f79a1e; }
.mint{ color: #8ff0cf; }
```
FILE: chart.js
```js
// one entry per candle: direction, body top, body bottom, high, low
const candles = `
d281,298,281,310 u264,299,258,304 d264,272,262,286 u264,272,248,272 d264,276,239,278 d276,288,273,296
u270,288,268,302 d270,288,262,290 d288,307,276,310 d307,320,306,338 u299,320,278,320 d299,382,299,383
d382,431,378,464 u395,431,393,452 d395,406,387,422 u394,406,377,418 d394,414,378,432 d414,424,402,432
u409,424,405,445 d409,452,405,452 u422,452,415,464 d422,433,409,434 u409,433,405,452 d409,422,396,429
d422,464,418,472 d464,465,456,487 u434,465,432,466 d434,448,427,478 d448,499,437,525 d498,503,487,536
d503,521,497,530 u496,521,491,533 u441,496,432,504 u427,441,403,445 d427,434,402,438 d434,439,433,460
d439,484,435,488 u410,484,408,484 u409,411,398,421 u393,410,383,432 d393,400,380,411 d400,434,380,445
d434,448,405,449 d448,489,443,502 u484,489,473,497 u476,484,468,490 d476,486,462,500 d485,488,484,509
d488,497,487,508 u467,497,464,503 d467,473,442,475 d473,485,461,494 u483,485,478,501 u475,483,454,484
u412,475,410,476 u395,412,387,418 u376,395,370,410 d376,408,354,409 u400,408,388,409 u393,400,374,404
u391,393,380,403 d392,400,380,410 d400,403,396,416 d403,445,396,446 u421,445,411,445 u416,421,397,424
u399,417,392,438 u398,399,372,399 u324,399,320,407 d324,379,318,380 u351,379,344,380 d351,381,343,388
u358,381,356,381 d358,407,348,408 u397,407,384,412 u385,397,380,407 d385,407,382,414 u399,407,382,408
u396,400,383,406 d396,411,383,416 d411,412,402,432 d412,426,411,432 d426,430,416,449 u386,430,380,430
d386,397,380,416 d396,400,372,413 u393,400,387,409 u327,394,315,395 u265,327,257,328 u165,265,160,269
d165,180,159,193 d180,218,152,222 d218,237,213,251 u193,237,192,238 u159,194,149,194 u138,159,133,176
d138,147,131,156 d147,179,117,181 d179,185,146,198 d185,193,174,206 u155,193,148,194 d155,181,154,200
d181,189,156,193 d189,190,184,214 d190,211,178,225 d211,223,187,224 d223,251,221,259 u227,251,208,253
d227,271,214,277 d271,312,254,325 d312,331,296,334 u297,331,292,331 u264,297,238,312 u220,264,218,264
u216,221,192,222 u193,217,182,245 d193,209,175,209 u193,209,193,209 d193,240,178,249 d239,251,227,258
d251,271,250,293 d271,300,270,302 d300,425,293,433 u389,425,360,464 d389,393,354,396 d393,444,385,448
d444,458,433,478 d457,480,450,503 d480,553,468,569 d553,571,546,582 d571,577,555,592 u576,577,558,590
u576,577,555,577 u554,577,533,577 d554,586,548,596 u555,586,543,586 d555,561,545,573 u499,562,497,562
d499,546,498,552 d546,564,542,579 u541,564,512,568 d541,568,525,576 d567,595,557,605 u545,595,540,607
u505,546,504,550 u500,506,484,506 d500,523,495,532 u485,523,483,523 u474,486,462,487 d474,493,462,496
d493,494,483,501 u464,494,458,495 u454,464,443,468 u454,455,436,455 d455,457,448,467 d457,463,437,467
u450,463,435,463 d450,460,442,467 u442,461,439,467 d442,462,440,462 u452,462,450,488 d452,482,435,490
d482,491,481,502 u435,491,428,497 d435,451,421,455 u441,451,433,452 u440,441,428,448 d440,443,438,453
u416,443,412,443 d416,433,406,435 u430,433,417,434 u396,431,395,431 u374,396,361,397 d374,389,364,395
d388,397,384,402 d396,404,385,407 d403,404,400,416 u385,405,384,410 u366,385,364,385 u345,366,329,367
d345,359,335,373 d359,362,358,384 d362,424,342,424 u420,424,419,455 u415,421,394,427 d415,440,414,440
u436,440,423,456 d436,441,429,444 u440,441,431,454 d440,445,438,466 d445,468,443,489 d468,496,468,500
d496,501,490,543 u495,501,488,517 u486,495,485,501 u462,486,457,487`;

const STEP = 4.513;      // px per 5 minute candle
const HOUR = STEP * 12;
const TOP = 57;          // height of the bars above the chart

let svg = "";
candles.trim().split(/\s+/).forEach((c, i) => {
    let dir = c[0] == "u" ? "up" : "down";
    let [top, bottom, high, low] = c.slice(1).split(",").map(Number);
    let x = 1 + i * STEP;
    svg += `<rect class="${dir} wick" x="${x - 0.5}" y="${high - TOP}" width="1" height="${low - high}"/>`;
    svg += `<rect class="${dir}" x="${x - 1.7}" y="${top - TOP}" width="3.4" height="${Math.max(1, bottom - top)}"/>`;
});
svg += `<line x1="0" x2="1188" y1="405.5" y2="405.5" stroke="#5468c4" stroke-dasharray="1 1" opacity="0.7"/>`;
document.getElementById("plot").innerHTML = svg;

// price labels every 0,00020
let priceAxis = document.getElementById("price_axis");
for (let i = 0; i < 21; i++) {
    if (i == 13 || i == 19) continue; // covered by the last price and the chat
    let label = document.createElement("span");
    label.textContent = "1," + (17980 - i * 20);
    label.style.top = 38 + i * 27.67 + "px";
    priceAxis.appendChild(label);
}

// hour labels, the session break shows the day
let timeAxis = document.getElementById("time_axis");
for (let h = 1; h <= 22; h++) {
    let label = document.createElement("span");
    label.textContent = h == 17 ? "28" : String(h).padStart(2, "0") + ":00";
    label.style.left = 19 + (h - 1) * HOUR + "px";
    timeAxis.appendChild(label);
}
```
